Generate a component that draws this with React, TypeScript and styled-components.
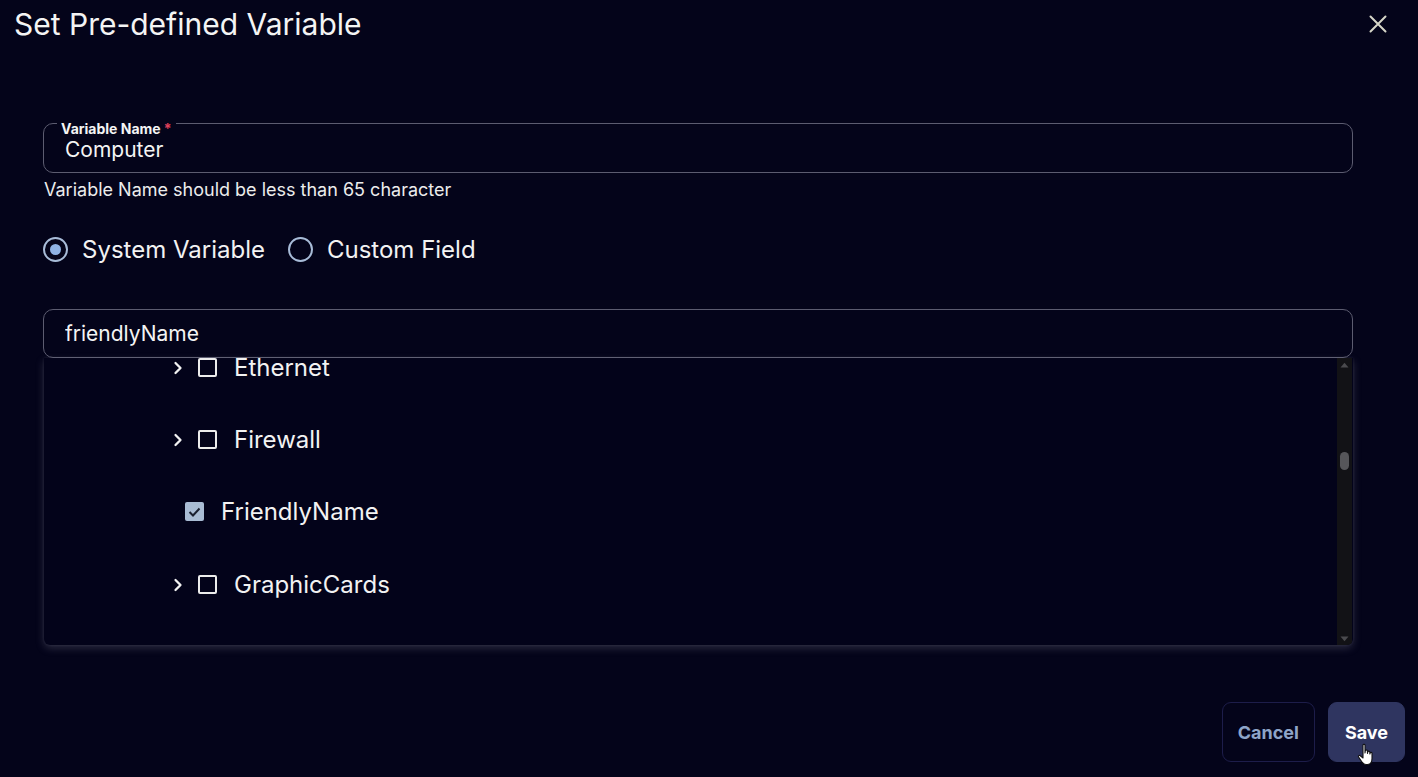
import React, { useLayoutEffect, useRef } from "react";
import styled, { createGlobalStyle } from "styled-components";

const Global = createGlobalStyle`
  html, body { margin: 0; padding: 0; background: #04041a; }
  body { font-family: Inter, "Noto Sans", "Liberation Sans", sans-serif; color: #f2f2f2; }
  * { box-sizing: border-box; }
`;

const Page = styled.div`
  width: 1418px;
  height: 777px;
  background: #04041a;
  display: flex;
  flex-direction: column;
  overflow: hidden;
`;

const Header = styled.div`
  height: 50px;
  display: flex;
  align-items: center;
  justify-content: space-between;
  padding: 0 30px 2px 14px;
`;

const Title = styled.h1`
  margin: 0;
  font-size: 30px;
  font-weight: 400;
  color: #f4f4f4;
`;

const CloseButton = styled.button`
  background: none;
  border: none;
  padding: 0;
  width: 20px;
  height: 20px;
  display: flex;
  align-items: center;
  justify-content: center;
  cursor: pointer;
`;

const Body = styled.div`
  padding: 73px 65px 0 43px;
  display: flex;
  flex-direction: column;
`;

const Outline = styled.div`
  height: 50px;
  border: 1px solid #5c5c70;
  border-radius: 10px;
  padding: 0 20px;
  position: relative;
  display: flex;
  align-items: center;
`;

const FloatLabel = styled.label`
  position: absolute;
  top: -3px;
  left: 13px;
  font-size: 14px;
  font-weight: 700;
  color: #f4f4f4;
  padding: 0 4px;
  line-height: 16px;
  background: #04041a;
`;

const Asterisk = styled.span`
  color: #e0405a;
  margin-left: 3px;
`;

const TextInput = styled.input`
  background: transparent;
  border: none;
  outline: none;
  color: #f4f4f4;
  font-family: inherit;
  font-size: 21px;
  width: 100%;
  padding: 0 0 0 1px;
  margin-top: 2px;
`;

const Helper = styled.div`
  font-size: 18px;
  line-height: 22px;
  color: #ececec;
  margin-top: 6px;
  padding-left: 1px;
`;

const RadioGroup = styled.div`
  display: flex;
  align-items: center;
  gap: 23px;
  margin-top: 33px;
  height: 30px;
`;

const RadioLabel = styled.label`
  display: flex;
  align-items: center;
  gap: 14px;
  font-size: 24px;
  color: #f2f2f2;
`;

const RadioCircle = styled.span<{ $checked?: boolean }>`
  width: 25px;
  height: 25px;
  border-radius: 50%;
  border: 2.5px solid #a8bcd8;
  display: flex;
  align-items: center;
  justify-content: center;
  &::after {
    content: "";
    width: 11px;
    height: 11px;
    border-radius: 50%;
    background: ${(p) => (p.$checked ? "#8fb2e4" : "transparent")};
  }
`;

const SearchBox = styled.div`
  margin-top: 45px;
  height: 49px;
  border: 1px solid #5c5c70;
  border-radius: 10px;
  display: flex;
  align-items: center;
  padding: 0 21px;
`;

const SearchInput = styled.input`
  background: transparent;
  border: none;
  outline: none;
  color: #f4f4f4;
  font-family: inherit;
  font-size: 21px;
  width: 100%;
  padding: 0;
`;

const TreePanel = styled.div`
  margin-left: 1px;
  height: 287px;
  display: flex;
  border-radius: 0 0 6px 6px;
  box-shadow: 0 3px 8px rgba(150, 150, 170, 0.28), 0 0 3px rgba(150, 150, 170, 0.15);
  background: #03031a;
  overflow: hidden;
`;

const TreeList = styled.div`
  flex: 1;
  overflow-y: scroll;
  scrollbar-width: none;
  &::-webkit-scrollbar { display: none; }
`;

const TreeRow = styled.div<{ $leaf?: boolean; $h: number }>`
  height: ${(p) => p.$h}px;
  display: flex;
  align-items: center;
  padding-left: ${(p) => (p.$leaf ? 141 : 129)}px;
  gap: ${(p) => (p.$leaf ? 17 : 0)}px;
`;

const Chevron = styled.span`
  width: 25px;
  display: flex;
  align-items: center;
`;

const Box = styled.span<{ $checked?: boolean }>`
  width: 19px;
  height: 19px;
  border-radius: 2px;
  border: ${(p) => (p.$checked ? "none" : "2.3px solid #ececec")};
  background: ${(p) => (p.$checked ? "#a9bcd4" : "transparent")};
  display: flex;
  align-items: center;
  justify-content: center;
  flex-shrink: 0;
`;

const RowLabel = styled.span<{ $leaf?: boolean }>`
  font-size: 24px;
  color: #f2f2f2;
  margin-left: ${(p) => (p.$leaf ? 0 : 17)}px;
`;

const ScrollTrack = styled.div`
  width: 15px;
  background: #121216;
  margin-right: 1px;
  display: flex;
  flex-direction: column;
  align-items: center;
  justify-content: space-between;
  padding: 4px 0 3px;
  position: relative;
`;

const Thumb = styled.div`
  position: absolute;
  left: 3px;
  top: 94px;
  width: 9px;
  height: 18px;
  border-radius: 5px;
  background: #56565a;
`;

const Footer = styled.div`
  margin-top: auto;
  display: flex;
  justify-content: flex-end;
  gap: 13px;
  padding: 0 13px 15px 0;
`;

const Button = styled.button<{ $primary?: boolean }>`
  height: 60px;
  padding: 0 ${(p) => (p.$primary ? 16 : 15)}px;
  border-radius: 9px;
  font-family: inherit;
  font-size: 18px;
  font-weight: 700;
  cursor: pointer;
  position: relative;
  border: 1px solid ${(p) => (p.$primary ? "#2f3560" : "#1d1d4a")};
  background: ${(p) => (p.$primary ? "#2f3560" : "transparent")};
  color: ${(p) => (p.$primary ? "#ffffff" : "#8ea5c8")};
`;

const Cursor = styled.span`
  position: absolute;
  left: 28px;
  top: 40px;
  width: 20px;
  height: 24px;
  pointer-events: none;
`;

const Arrow = ({ up }: { up?: boolean }) => (
  <svg width="9" height="6" viewBox="0 0 9 6">
    <path d={up ? "M0.5 5.5 L4.5 0.8 L8.5 5.5 Z" : "M0.5 0.5 L4.5 5.2 L8.5 0.5 Z"} fill="#4a4a4e" />
  </svg>
);

type Item = { label: string; leaf?: boolean; checked?: boolean; h: number };

const items: Item[] = [
  { label: "Disks", h: 73 },
  { label: "DisplayName", h: 73 },
  { label: "Domain", h: 73 },
  { label: "Ethernet", h: 73 },
  { label: "Firewall", h: 71 },
  { label: "FriendlyName", leaf: true, checked: true, h: 73 },
  { label: "GraphicCards", h: 73 },
  { label: "Hardware", h: 73 },
  { label: "HostName", h: 73 },
];

export default function App() {
  const listRef = useRef<HTMLDivElement>(null);
  useLayoutEffect(() => {
    if (listRef.current) listRef.current.scrollTop = 3 * 73 + 27;
  }, []);

  return (
    <Page>
      <Global />
      <Header>
        <Title>Set Pre-defined Variable</Title>
        <CloseButton aria-label="Close">
          <svg width="18" height="18" viewBox="0 0 18 18">
            <path d="M1.5 1.5 L16.5 16.5 M16.5 1.5 L1.5 16.5" stroke="#d6d6c8" strokeWidth="2" strokeLinecap="round" />
          </svg>
        </CloseButton>
      </Header>
      <Body>
        <Outline>
          <FloatLabel>
            Variable Name<Asterisk>*</Asterisk>
          </FloatLabel>
          <TextInput defaultValue="Computer" />
        </Outline>
        <Helper>Variable Name should be less than 65 character</Helper>
        <RadioGroup>
          <RadioLabel>
            <RadioCircle $checked />
            System Variable
          </RadioLabel>
          <RadioLabel>
            <RadioCircle />
            Custom Field
          </RadioLabel>
        </RadioGroup>
        <SearchBox>
          <SearchInput defaultValue="friendlyName" />
        </SearchBox>
        <TreePanel>
          <TreeList ref={listRef}>
            {items.map((it) => (
              <TreeRow key={it.label} $leaf={it.leaf} $h={it.h}>
                {!it.leaf && (
                  <Chevron>
                    <svg width="10" height="14" viewBox="0 0 10 14">
                      <path d="M2.5 2 L7.5 7 L2.5 12" stroke="#f2f2f2" strokeWidth="2.3" fill="none" strokeLinecap="round" strokeLinejoin="round" />
                    </svg>
                  </Chevron>
                )}
                <Box $checked={it.checked}>
                  {it.checked && (
                    <svg width="13" height="10" viewBox="0 0 13 10">
                      <path d="M1.5 5 L5 8.5 L11.5 1.5" stroke="#1a2030" strokeWidth="2" fill="none" />
                    </svg>
                  )}
                </Box>
                <RowLabel $leaf={it.leaf}>{it.label}</RowLabel>
              </TreeRow>
            ))}
          </TreeList>
          <ScrollTrack>
            <Arrow up />
            <Thumb />
            <Arrow />
          </ScrollTrack>
        </TreePanel>
      </Body>
      <Footer>
        <Button>Cancel</Button>
        <Button $primary>
          Save
          <Cursor>
            <svg width="20" height="24" viewBox="0 0 20 24">
              <path
                d="M6 2.2 C6 1 8 1 8 2.2 L8 10 L8.3 7.8 C8.5 6.8 10.3 6.8 10.4 7.9 L10.5 10.5 L10.8 8.8 C11 7.9 12.7 7.9 12.8 9 L12.9 11 L13.2 9.9 C13.5 9 15 9.2 15 10.3 L15 15.5 C15 19 13.5 21.5 10.5 21.5 L9 21.5 C7 21.5 5.8 20.3 4.6 18.6 L1.6 14 C1 13 2.2 11.8 3.3 12.7 L6 15 Z"
                fill="#ffffff"
                stroke="#111111"
                strokeWidth="1.1"
                strokeLinejoin="round"
              />
            </svg>
          </Cursor>
        </Button>
      </Footer>
    </Page>
  );
}
